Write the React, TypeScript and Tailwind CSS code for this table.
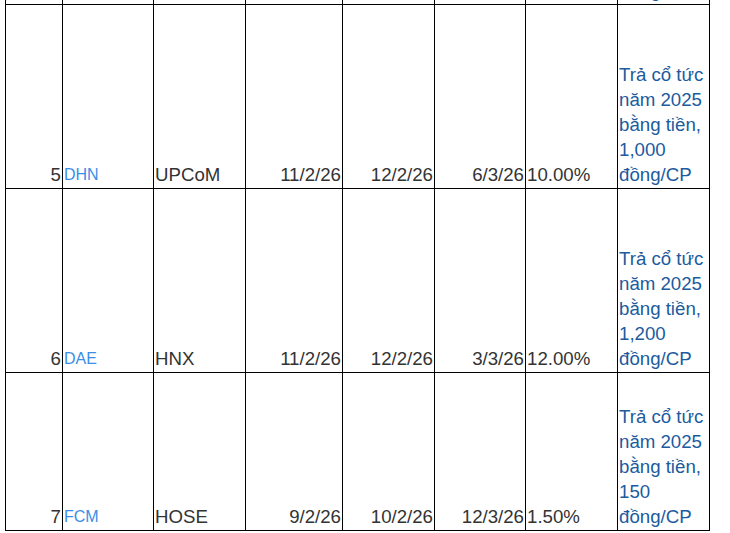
import React from 'react';

interface DividendRow {
  stt: number | null;
  ticker: string;
  exchange: string;
  exDate: string;
  recordDate: string;
  payDate: string;
  rate: string;
  note: string;
  height: string;
}

// hàng 4 chỉ lộ phần chân chữ "g" ở mép trên
const ROWS: DividendRow[] = [
  { stt: null, ticker: '', exchange: '', exDate: '', recordDate: '', payDate: '', rate: '', note: 'Trả cổ tức năm 2025 bằng tiền, 800 đồng/CP', height: 'h-[184px]' },
  { stt: 5, ticker: 'DHN', exchange: 'UPCoM', exDate: '11/2/26', recordDate: '12/2/26', payDate: '6/3/26', rate: '10.00%', note: 'Trả cổ tức năm 2025 bằng tiền, 1,000 đồng/CP', height: 'h-[184px]' },
  { stt: 6, ticker: 'DAE', exchange: 'HNX', exDate: '11/2/26', recordDate: '12/2/26', payDate: '3/3/26', rate: '12.00%', note: 'Trả cổ tức năm 2025 bằng tiền, 1,200 đồng/CP', height: 'h-[184px]' },
  { stt: 7, ticker: 'FCM', exchange: 'HOSE', exDate: '9/2/26', recordDate: '10/2/26', payDate: '12/3/26', rate: '1.50%', note: 'Trả cổ tức năm 2025 bằng tiền, 150 đồng/CP', height: 'h-[158px]' },
];

const cell = 'border border-black p-[1px] align-bottom';

export default function App() {
  return (
    <div className="h-[533px] w-[730px] overflow-hidden bg-white">
      <div className="-mt-[180px] pl-[5px]">
        <table
          className="table-fixed border-collapse text-[18.67px] leading-[25px] text-[#333333]"
          style={{ fontFamily: '"Liberation Sans", Arial, sans-serif' }}
        >
          <colgroup>
            <col className="w-[57px]" />
            <col className="w-[91px]" />
            <col className="w-[92px]" />
            <col className="w-[97px]" />
            <col className="w-[92px]" />
            <col className="w-[91px]" />
            <col className="w-[92px]" />
            <col className="w-[92px]" />
          </colgroup>
          <tbody>
            {ROWS.map((row, i) => (
              <tr key={i}>
                <td className={`${cell} ${row.height} text-right`}>{row.stt}</td>
                <td className={`${cell} text-[16px] text-[#3b8ee8]`}>{row.ticker}</td>
                <td className={cell}>{row.exchange}</td>
                <td className={`${cell} text-right`}>{row.exDate}</td>
                <td className={`${cell} text-right`}>{row.recordDate}</td>
                <td className={`${cell} text-right`}>{row.payDate}</td>
                <td className={cell}>{row.rate}</td>
                <td className={`${cell} text-[#1b5b9e]`}>{row.note}</td>
              </tr>
            ))}
          </tbody>
        </table>
      </div>
    </div>
  );
}
